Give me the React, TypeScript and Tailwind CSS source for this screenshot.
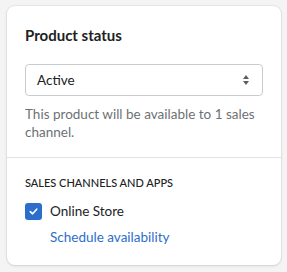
export default function App() {
  return (
    <div
      className="min-h-[272px] w-[287px] bg-[#f4f4f4] px-[7px] pt-[6px]"
      style={{ fontFamily: 'Lato, "Noto Sans", sans-serif' }}
    >
      <div className="h-[259px] w-[274px] rounded-[8px] bg-white shadow-[0_0_0_1px_rgba(63,63,68,0.05),0_1px_3px_rgba(63,63,68,0.15)]">
        <div className="px-[18px] pt-[19px] pb-[16px]">
          <h2 className="text-[15px] leading-[20px] font-bold text-[#202223]">
            Product status
          </h2>
          <div className="mt-[19px] flex h-[32px] items-center justify-between rounded-[4px] border border-[#c9cccf] pr-[12px] pl-[11px]">
            <span className="text-[13.5px] text-[#202223]">Active</span>
            <svg width="8" height="12" viewBox="0 0 8 12" fill="#5c5f62">
              <path d="M4 1 L7 5 H1 Z" />
              <path d="M4 11 L1 7 H7 Z" />
            </svg>
          </div>
          <p className="mt-[9px] text-[13.5px] leading-[18px] text-[#6d7175]">
            This product will be available to 1 sales channel.
          </p>
        </div>
        <div className="border-t border-[#e1e3e5] px-[18px] pt-[17px]">
          <h3 className="text-[11px] leading-[16px] font-medium text-[#202223] uppercase">
            Sales channels and apps
          </h3>
          <label className="mt-[10px] flex items-center gap-[8px]">
            <span className="flex h-[17px] w-[17px] items-center justify-center rounded-[3px] bg-[#2c6ecb]">
              <svg width="11" height="11" viewBox="0 0 12 12" fill="none">
                <path
                  d="M2.5 6.2 L5 8.5 L9.5 3.5"
                  stroke="white"
                  strokeWidth="1.8"
                  strokeLinecap="round"
                  strokeLinejoin="round"
                />
              </svg>
            </span>
            <span className="text-[13.5px] leading-[20px] text-[#202223]">Online Store</span>
          </label>
          <a className="mt-[6px] ml-[25px] block text-[13.5px] leading-[20px] text-[#2c6ecb]" href="#">
            Schedule availability
          </a>
        </div>
      </div>
    </div>
  );
}
